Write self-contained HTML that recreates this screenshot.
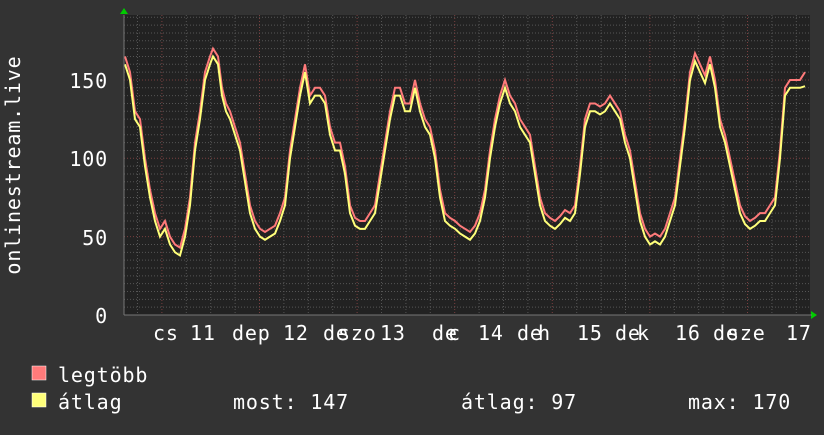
<!DOCTYPE html>
<html><head><meta charset="utf-8"><style>
body{margin:0;background:#333;width:824px;height:430px;overflow:hidden}
svg text{font-family:"DejaVu Sans Mono","Liberation Mono",monospace;font-size:20px;letter-spacing:0.85px;fill:#fff}
</style></head><body>
<svg width="824" height="430" xmlns="http://www.w3.org/2000/svg">
<rect x="124" y="15" width="686" height="300" fill="#222"/>
<g id="grid"></g>
<g>
<text x="108" y="88" text-anchor="end">150</text>
<text x="108" y="166" text-anchor="end">100</text>
<text x="108" y="245" text-anchor="end">50</text>
<text x="108" y="323" text-anchor="end">0</text>
<text transform="translate(20,165) rotate(-90)" text-anchor="middle">onlinestream.live</text>
<text x="153" y="340">cs</text><text x="190" y="340">11</text><text x="232" y="340">dep</text>
<text x="283" y="340">12</text><text x="323" y="340">de</text><text x="338" y="340">szo</text>
<text x="380" y="340">13</text><text x="432" y="340">de</text><text x="448" y="340">c</text>
<text x="478" y="340">14</text><text x="517" y="340">de</text><text x="538" y="340">h</text>
<text x="577" y="340">15</text><text x="615" y="340">de</text><text x="637" y="340">k</text>
<text x="675" y="340">16</text><text x="713" y="340">de</text><text x="727" y="340">sze</text>
<text x="786" y="340">17</text>
<rect x="32" y="366" width="14" height="14" fill="#ff7a7a" stroke="#fff" stroke-width="0.5"/>
<rect x="32" y="393" width="14" height="14" fill="#ffff7a" stroke="#fff" stroke-width="0.5"/>
<text x="58" y="382">legtöbb</text>
<text x="58" y="409">átlag</text>
<text x="233" y="409">most: 147</text>
<text x="461" y="409">átlag: 97</text>
<text x="688" y="409">max: 170</text>
</g>
<g id="lines">
<polyline transform="translate(0,315) scale(1,-1.567) translate(0,5)" vector-effect="non-scaling-stroke" fill="none" stroke="#ff7a7a" stroke-width="2" points="125,160 130,150 135,125 140,120 145,95 150,75 155,60 160,50 165,55 170,45 175,40 180,38 185,50 190,70 195,105 200,125 205,150 210,160 213,165 218,160 222,140 226,130 230,125 235,115 240,105 245,85 250,65 255,55 260,50 265,48 270,50 275,52 280,60 285,70 290,100 295,120 300,140 305,155 310,135 315,140 320,140 325,135 330,115 335,105 340,105 345,90 350,65 355,57 360,55 365,55 370,60 375,65 380,85 385,105 390,125 395,140 400,140 405,130 410,130 415,145 420,130 425,120 430,115 435,100 440,75 445,60 450,57 455,55 460,52 465,50 470,48 475,52 480,60 485,75 490,100 495,120 500,135 505,145 510,135 515,130 520,120 525,115 530,110 535,90 540,70 545,60 550,57 555,55 560,58 565,62 570,60 575,65 580,90 585,120 590,130 595,130 600,128 605,130 610,135 615,130 620,125 625,110 630,100 635,80 640,60 645,50 650,45 655,47 660,45 665,50 670,60 675,70 680,95 685,120 690,150 695,162 700,155 705,148 710,160 715,145 720,120 725,110 730,95 735,80 740,65 745,58 750,55 755,57 760,60 765,60 770,65 775,70 780,100 785,140 790,145 795,145 800,145 805,150"/>
<polyline transform="translate(0,315) scale(1,-1.567)" vector-effect="non-scaling-stroke" fill="none" stroke="#ffff7a" stroke-width="2" points="125,160 130,150 135,125 140,120 145,95 150,75 155,60 160,50 165,55 170,45 175,40 180,38 185,50 190,70 195,105 200,125 205,150 210,160 213,165 218,160 222,140 226,130 230,125 235,115 240,105 245,85 250,65 255,55 260,50 265,48 270,50 275,52 280,60 285,70 290,100 295,120 300,140 305,155 310,135 315,140 320,140 325,135 330,115 335,105 340,105 345,90 350,65 355,57 360,55 365,55 370,60 375,65 380,85 385,105 390,125 395,140 400,140 405,130 410,130 415,145 420,130 425,120 430,115 435,100 440,75 445,60 450,57 455,55 460,52 465,50 470,48 475,52 480,60 485,75 490,100 495,120 500,135 505,145 510,135 515,130 520,120 525,115 530,110 535,90 540,70 545,60 550,57 555,55 560,58 565,62 570,60 575,65 580,90 585,120 590,130 595,130 600,128 605,130 610,135 615,130 620,125 625,110 630,100 635,80 640,60 645,50 650,45 655,47 660,45 665,50 670,60 675,70 680,95 685,120 690,150 695,162 700,155 705,148 710,160 715,145 720,120 725,110 730,95 735,80 740,65 745,58 750,55 755,57 760,60 765,60 770,65 775,70 780,100 785,140 790,145 795,145 800,145 805,146"/>
</g>
<polygon points="120,14 128,14 124,8" fill="#0c0"/>
<polygon points="811,311 811,319 817,315" fill="#0c0"/>
<line x1="124" y1="315" x2="812" y2="315" stroke="#777"/>
<line x1="124" y1="15" x2="124" y2="315" stroke="#777"/>
</svg>
<script>
(function(){
var g=document.getElementById('grid'),s='';
for(var i=0;i<=38;i++){var y=315-i*7.835;var major=i%10==0;
s+='<line x1="124" x2="810" y1="'+y+'" y2="'+y+'" stroke="'+(major?'#7a3f3f':'#555')+'" stroke-dasharray="1,2"/>';}
for(var x=137.5;x<810;x+=24.4){var m=Math.abs(((x-162)/97.6)-Math.round((x-162)/97.6))<0.05;
s+='<line y1="15" y2="315" x1="'+x+'" x2="'+x+'" stroke="'+(m?'#7a3f3f':'#555')+'" stroke-dasharray="1,2"/>';}
g.innerHTML=s;
})();
</script>
</body></html>
